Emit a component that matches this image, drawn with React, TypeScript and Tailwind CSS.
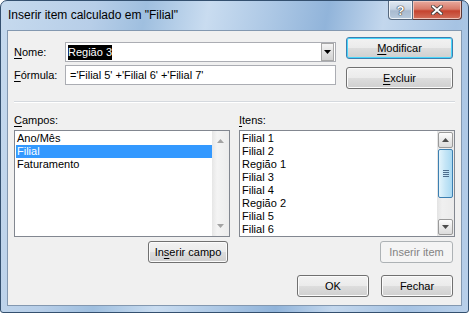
import React from 'react';

const font = "font-['Liberation_Sans',Tahoma,Arial,sans-serif]";

function Btn({ children, className = '', primary = false, disabled = false }: { children: React.ReactNode; className?: string; primary?: boolean; disabled?: boolean }) {
  let look = 'border-[#707070] text-black bg-[linear-gradient(to_bottom,#f2f2f2_0%,#ebebeb_48%,#dddddd_52%,#cfcfcf_100%)] shadow-[inset_0_0_0_1px_#fbfbfb]';
  if (primary) look = 'border-[#3c7fb1] text-black bg-[linear-gradient(to_bottom,#f2f2f2_0%,#ebebeb_48%,#dddddd_52%,#cfcfcf_100%)] shadow-[inset_0_0_0_1px_#48d6fb]';
  if (disabled) look = 'border-[#adb2b5] text-[#838383] bg-[#f4f4f4]';
  return (
    <div className={`flex items-center justify-center h-[22px] rounded-[3px] border text-[11px] leading-[13px] ${look} ${className}`}>
      {children}
    </div>
  );
}

function U({ children }: { children: React.ReactNode }) {
  return <span className="underline underline-offset-[2px] decoration-1">{children}</span>;
}

function Arrow({ up, color }: { up?: boolean; color: string }) {
  return (
    <svg width="7" height="4" viewBox="0 0 7 4">
      <path d={up ? 'M0 4 L3.5 0 L7 4 Z' : 'M0 0 L7 0 L3.5 4 Z'} fill={color} />
    </svg>
  );
}

function ListBox({ items, selected, scroll }: { items: string[]; selected?: number; scroll: 'disabled' | 'active' }) {
  return (
    <div className="flex h-[107px] w-[216px] border border-[#828790] bg-white overflow-hidden">
      <div className="flex-1 pl-[1px] pt-[1px]">
        {items.map((it, i) => (
          <div
            key={it}
            className={`h-[13px] leading-[13px] pl-[1px] text-[11px] whitespace-nowrap ${i === selected ? 'bg-[#3399ff] text-white' : 'text-black'}`}
          >
            {it}
          </div>
        ))}
      </div>
      {scroll === 'disabled' ? (
        <div className="w-[17px] flex flex-col items-center justify-between py-[8px] bg-[linear-gradient(to_right,#e6e6e6,#f4f4f4_30%,#ececec)]">
          <Arrow up color="#a3a3a3" />
          <Arrow color="#a3a3a3" />
        </div>
      ) : (
        <div className="w-[17px] flex flex-col bg-[linear-gradient(to_right,#e3e3e3,#f0f0f0_30%,#ebebeb)] px-[1px] py-[1px]">
          <div className="h-[16px] flex items-center justify-center rounded-[2px] border border-[#9a9a9a] bg-[linear-gradient(to_bottom,#fdfdfd,#eaeaea_50%,#dcdcdc)]">
            <Arrow up color="#4d4d4d" />
          </div>
          <div className="h-[49px] mt-[1px] flex flex-col items-center justify-center gap-[1px] rounded-[2px] border border-[#3c7fb1] bg-[linear-gradient(to_right,#e3f4fc,#c4e5f6_50%,#a9d9f2)]">
            <div className="w-[6px] h-[1px] bg-[#4e6d8c]" />
            <div className="w-[6px] h-[1px] bg-[#4e6d8c]" />
            <div className="w-[6px] h-[1px] bg-[#4e6d8c]" />
            <div className="w-[6px] h-[1px] bg-[#4e6d8c]" />
          </div>
          <div className="flex-1" />
          <div className="h-[16px] flex items-center justify-center rounded-[2px] border border-[#9a9a9a] bg-[linear-gradient(to_bottom,#fdfdfd,#eaeaea_50%,#dcdcdc)]">
            <Arrow color="#4d4d4d" />
          </div>
        </div>
      )}
    </div>
  );
}

export default function App() {
  return (
    <div className={`w-[469px] h-[313px] flex flex-col border border-[#34506f] rounded-t-[7px] rounded-b-[3px] overflow-hidden bg-[linear-gradient(100deg,#c6daee_0%,#b7cee8_18%,#9fbfdf_28%,#c9dcf0_40%,#adc8e5_52%,#91b4da_63%,#c3d7ed_74%,#a6c3e3_88%,#b9d0ea_100%)] ${font}`}>
      {/* title bar */}
      <div className="h-[29px] flex items-start">
        <div className="pl-[7px] pt-[7px] text-[12px] leading-[15px] text-black">Inserir item calculado em "Filial"</div>
        <div className="ml-auto mr-[6px] flex">
          <div className="w-[25px] h-[19px] flex items-center justify-center rounded-bl-[4px] border border-t-0 border-[#56687e] bg-[linear-gradient(to_bottom,#e1e9f2_0%,#c7d4e3_45%,#a9bbd0_55%,#b8cadd_100%)] shadow-[inset_0_0_0_1px_#eef3f8]">
            <span className="text-white font-bold text-[13px] leading-[13px] [text-shadow:0_0_1px_#333,0_0_1px_#333,0_0_1px_#333]">?</span>
          </div>
          <div className="w-[49px] h-[19px] flex items-center justify-center rounded-br-[4px] border border-l-0 border-t-0 border-[#5a3838] bg-[linear-gradient(to_bottom,#e8aa9e_0%,#d77b6a_45%,#c5432f_55%,#d2705c_100%)] shadow-[inset_0_0_0_1px_#f0c4ba]">
            <svg width="12" height="10" viewBox="0 0 12 10">
              <path d="M2 1.5 L10 8.5 M10 1.5 L2 8.5" stroke="#3a3a3a" strokeWidth="3.6" strokeLinecap="square" />
              <path d="M2 1.5 L10 8.5 M10 1.5 L2 8.5" stroke="#ffffff" strokeWidth="2" strokeLinecap="square" />
            </svg>
          </div>
        </div>
      </div>

      <div className="flex flex-1">
        <div className="w-[6px]" />
        {/* client area */}
        <div className="w-[455px] h-[276px] border border-[#8398b0] bg-[#f0f0f0] px-[6px] pt-[6px] text-[11px] leading-[13px] text-black">
          <div className="flex">
            <div className="mt-[5px] flex flex-col gap-[3px]">
              <div className="flex items-center">
                <div className="w-[51px]"><U>N</U>ome:</div>
                <div className="w-[271px] h-[20px] flex items-center border border-[#abadb3] bg-white">
                  <div className="flex-1 pl-[2px]">
                    <span className="bg-black text-white inline-block leading-[15px]">Região 3</span>
                  </div>
                  <div className="w-[13px] h-[18px] mr-[1px] flex items-center justify-center border border-[#a7a7a7] bg-[linear-gradient(to_bottom,#f4f4f4,#e2e2e2_50%,#d2d2d2)]">
                    <Arrow color="#000000" />
                  </div>
                </div>
              </div>
              <div className="flex items-center">
                <div className="w-[51px]"><U>F</U>órmula:</div>
                <div className="w-[271px] h-[20px] flex items-center border border-[#abadb3] bg-white pl-[4px] whitespace-nowrap">
                  ='Filial 5' +'Filial 6' +'Filial 7'
                </div>
              </div>
            </div>
            <div className="ml-[10px] flex flex-col gap-[8px]">
              <Btn primary className="w-[107px]"><U>M</U>odificar</Btn>
              <Btn className="w-[107px]"><U>E</U>xcluir</Btn>
            </div>
          </div>

          <div className="mt-[12px] h-[2px] border-t border-[#d5d9de] bg-white" />

          <div className="mt-[11px] flex gap-[9px]">
            <div className="flex flex-col w-[216px]">
              <div className="h-[13px]"><U>C</U>ampos:</div>
              <div className="mt-[3px]">
                <ListBox items={['Ano/Mês', 'Filial', 'Faturamento']} selected={1} scroll="disabled" />
              </div>
              <div className="mt-[4px] flex justify-end pr-[2px]">
                <Btn className="w-[80px]">In<U>s</U>erir campo</Btn>
              </div>
            </div>
            <div className="flex flex-col w-[216px]">
              <div className="h-[13px]"><U>I</U>tens:</div>
              <div className="mt-[3px]">
                <ListBox items={['Filial 1', 'Filial 2', 'Região 1', 'Filial 3', 'Filial 4', 'Região 2', 'Filial 5', 'Filial 6']} scroll="active" />
              </div>
              <div className="mt-[4px] flex justify-end pr-[2px]">
                <Btn disabled className="w-[73px]">Inserir item</Btn>
              </div>
            </div>
          </div>

          <div className="mt-[12px] flex justify-end gap-[12px] pr-[2px]">
            <Btn className="w-[72px]">OK</Btn>
            <Btn className="w-[72px]">Fechar</Btn>
          </div>
        </div>
        <div className="w-[6px]" />
      </div>
    </div>
  );
}
